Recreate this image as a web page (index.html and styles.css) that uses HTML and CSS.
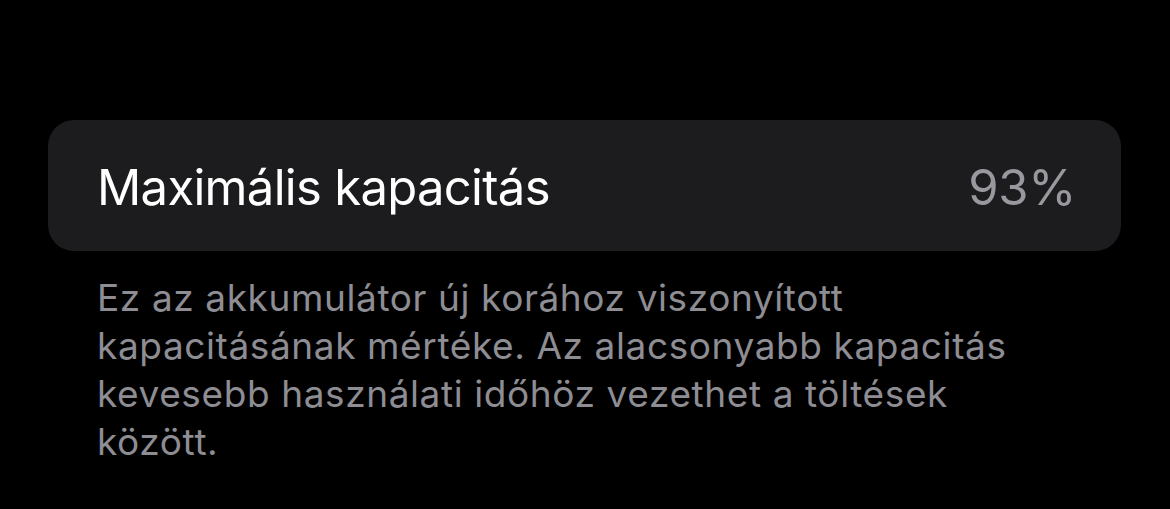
FILE: index.html
```html
<!DOCTYPE html>
<html lang="hu">
<head>
<meta charset="utf-8">
<link rel="stylesheet" href="styles.css">
</head>
<body>
<main class="page">
  <section class="card">
    <span class="label">Maximális kapacitás</span>
    <span class="value">93%</span>
  </section>
  <p class="footer">Ez az akkumulátor új korához viszonyított<br>kapacitásának mértéke. Az alacsonyabb kapacitás<br>kevesebb használati időhöz vezethet a töltések<br>között.</p>
</main>
</body>
</html>
```

FILE: styles.css
```css
html, body {
  margin: 0;
  padding: 0;
  background: #000;
  height: 100%;
}
body {
  font-family: Inter, "Noto Sans", "Liberation Sans", sans-serif;
  -webkit-font-smoothing: antialiased;
}
.page {
  padding: 120px 49px 0 48px;
}
.card {
  box-sizing: border-box;
  height: 131px;
  background: #1c1c1e;
  border-radius: 26px;
  display: flex;
  align-items: center;
  justify-content: space-between;
  padding: 3px 45px 0 49px;
}
.label {
  color: #fff;
  font-size: 49px;
  letter-spacing: -0.7px;
}
.value {
  color: #98989e;
  font-size: 49px;
  letter-spacing: -0.3px;
}
.footer {
  margin: 23px 0 0 49px;
  color: #8d8d93;
  font-size: 37px;
  line-height: 48px;
  letter-spacing: 0.6px;
}
```
